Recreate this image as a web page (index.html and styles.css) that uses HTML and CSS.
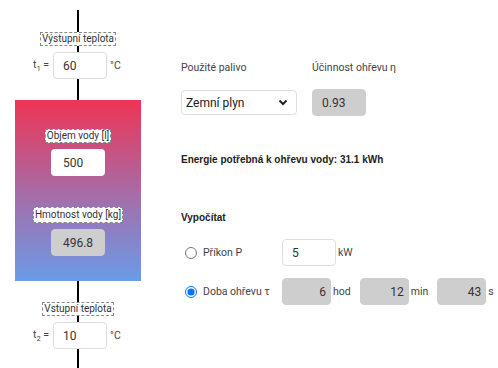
FILE: index.html
```html
<!DOCTYPE html>
<html lang="cs">
<head>
  <meta charset="UTF-8">
  <meta name="viewport" content="width=device-width, initial-scale=1.0">
  <title>Ohřev vody</title>
  <link rel="stylesheet" href="styles.css">
</head>
<body>
  <div class="page">
    <div class="pipe">
      <div class="pipe-end top">
        <span class="tag">Výstupní teplota</span>
        <div class="temp-row">
          <span class="sym">t<sub>1</sub> =</span>
          <input type="text" class="field" value="60">
          <span class="unit">°C</span>
        </div>
      </div>
      <div class="tank">
        <span class="tag">Objem vody [l]</span>
        <input type="text" class="field plain" value="500">
        <span class="tag second">Hmotnost vody [kg]</span>
        <input type="text" class="field readonly center" value="496.8" readonly>
      </div>
      <div class="pipe-end bottom">
        <span class="tag">Vstupní teplota</span>
        <div class="temp-row">
          <span class="sym">t<sub>2</sub> =</span>
          <input type="text" class="field" value="10">
          <span class="unit">°C</span>
        </div>
      </div>
    </div>

    <div class="panel">
      <div class="fuel">
        <span class="label">Použité palivo</span>
        <span class="label">Účinnost ohřevu η</span>
        <div class="select-wrap">
          <select class="fuel-select">
            <option>Zemní plyn</option>
            <option>Elektřina</option>
          </select>
          <svg class="chevron" width="10" height="7" viewBox="0 0 10 7"><path d="M1.5 1.5 L5 5 L8.5 1.5" fill="none" stroke="#222" stroke-width="2"/></svg>
        </div>
        <input type="text" class="field readonly" value="0.93" readonly>
      </div>

      <p class="energy">Energie potřebná k ohřevu vody: 31.1 kWh</p>

      <p class="heading">Vypočítat</p>

      <div class="calc">
        <label class="opt"><input type="radio" name="calc"> Příkon P</label>
        <div class="vals">
          <input type="text" class="field" value="5">
          <span class="unit">kW</span>
        </div>
        <label class="opt"><input type="radio" name="calc" checked> Doba ohřevu τ</label>
        <div class="vals">
          <input type="text" class="field readonly right short" value="6" readonly>
          <span class="unit">hod</span>
          <input type="text" class="field readonly right short" value="12" readonly>
          <span class="unit">min</span>
          <input type="text" class="field readonly right short" value="43" readonly>
          <span class="unit">s</span>
        </div>
      </div>
    </div>
  </div>
</body>
</html>
```

FILE: styles.css
```css
body {
  margin: 0;
  font-family: Roboto, "Liberation Sans", sans-serif;
  font-size: 10.5px;
  color: #444;
  background: #fff;
}
.page {
  display: flex;
  padding: 10px 0 0 15px;
}
.pipe {
  width: 126px;
  height: 358px;
  display: flex;
  flex-direction: column;
  background: linear-gradient(to right, transparent 62px, #000 62px, #000 64px, transparent 64px);
}
.pipe-end {
  display: flex;
  flex-direction: column;
  align-items: center;
  gap: 6px;
}
.pipe-end.top {
  height: 90px;
  padding-top: 22px;
  box-sizing: border-box;
}
.pipe-end.bottom {
  padding-top: 21px;
}
.tag {
  background: #fff;
  border: 1px dashed #888;
  padding: 0 1px;
  line-height: 12px;
  font-size: 10px;
  color: #333;
  white-space: nowrap;
}
.temp-row {
  display: grid;
  grid-template-columns: 1fr 54px 1fr;
  width: 100%;
  align-items: center;
  padding-left: 4px;
  box-sizing: border-box;
}
.sym {
  text-align: right;
  padding-right: 4px;
}
.sym sub {
  font-size: 7.5px;
}
.temp-row .unit {
  padding-left: 3px;
}
.tank {
  height: 181px;
  display: flex;
  flex-direction: column;
  align-items: center;
  padding-top: 29px;
  box-sizing: border-box;
  background: linear-gradient(to bottom, #ee3455, #a86aa5 50%, #6a9be8);
}
.tank .tag + .field {
  margin-top: 6px;
}
.tank .tag.second {
  margin-top: 31px;
  line-height: 14px;
}
.field {
  width: 54px;
  height: 27px;
  box-sizing: border-box;
  border: 1px solid #dedede;
  border-radius: 4px;
  padding: 0 9px;
  font-family: Roboto, sans-serif;
  font-size: 12px;
  color: #333;
  background: #fff;
  outline: none;
}
.field.plain {
  border: none;
  padding-left: 12px;
}
.field.readonly {
  background: #cecece;
  border-color: #cecece;
}
.field.center {
  text-align: center;
}
.field.right {
  text-align: right;
  padding-right: 4px;
}
.field.short {
  width: 49px;
}
.panel {
  margin-left: 40px;
  padding-top: 51px;
}
.fuel {
  display: grid;
  grid-template-columns: 131px auto;
  row-gap: 14px;
  align-items: center;
}
.label {
  line-height: 14px;
}
.select-wrap {
  position: relative;
  width: 116px;
}
.fuel-select {
  appearance: none;
  width: 116px;
  height: 25px;
  border: 1px solid #dedede;
  border-radius: 4px;
  padding: 0 4px;
  background: #fff;
  font-family: Roboto, sans-serif;
  font-size: 12px;
  color: #222;
}
.chevron {
  position: absolute;
  right: 9px;
  top: 9px;
  pointer-events: none;
}
.energy, .heading {
  margin: 0;
  font-family: "Liberation Sans", Arial, sans-serif;
  font-weight: bold;
  font-size: 10px;
  line-height: 14px;
  color: #222;
}
.energy {
  margin-top: 37px;
}
.heading {
  margin-top: 44px;
}
.calc {
  display: grid;
  grid-template-columns: 101px auto;
  row-gap: 12px;
  align-items: center;
  margin-top: 14px;
}
.opt {
  display: flex;
  align-items: center;
  gap: 6px;
}
.opt input {
  margin: 0 0 0 4px;
  width: 12px;
  height: 12px;
}
.vals {
  display: flex;
  align-items: center;
  gap: 2px;
}
.vals .unit + .field {
  margin-left: 7px;
}
```
